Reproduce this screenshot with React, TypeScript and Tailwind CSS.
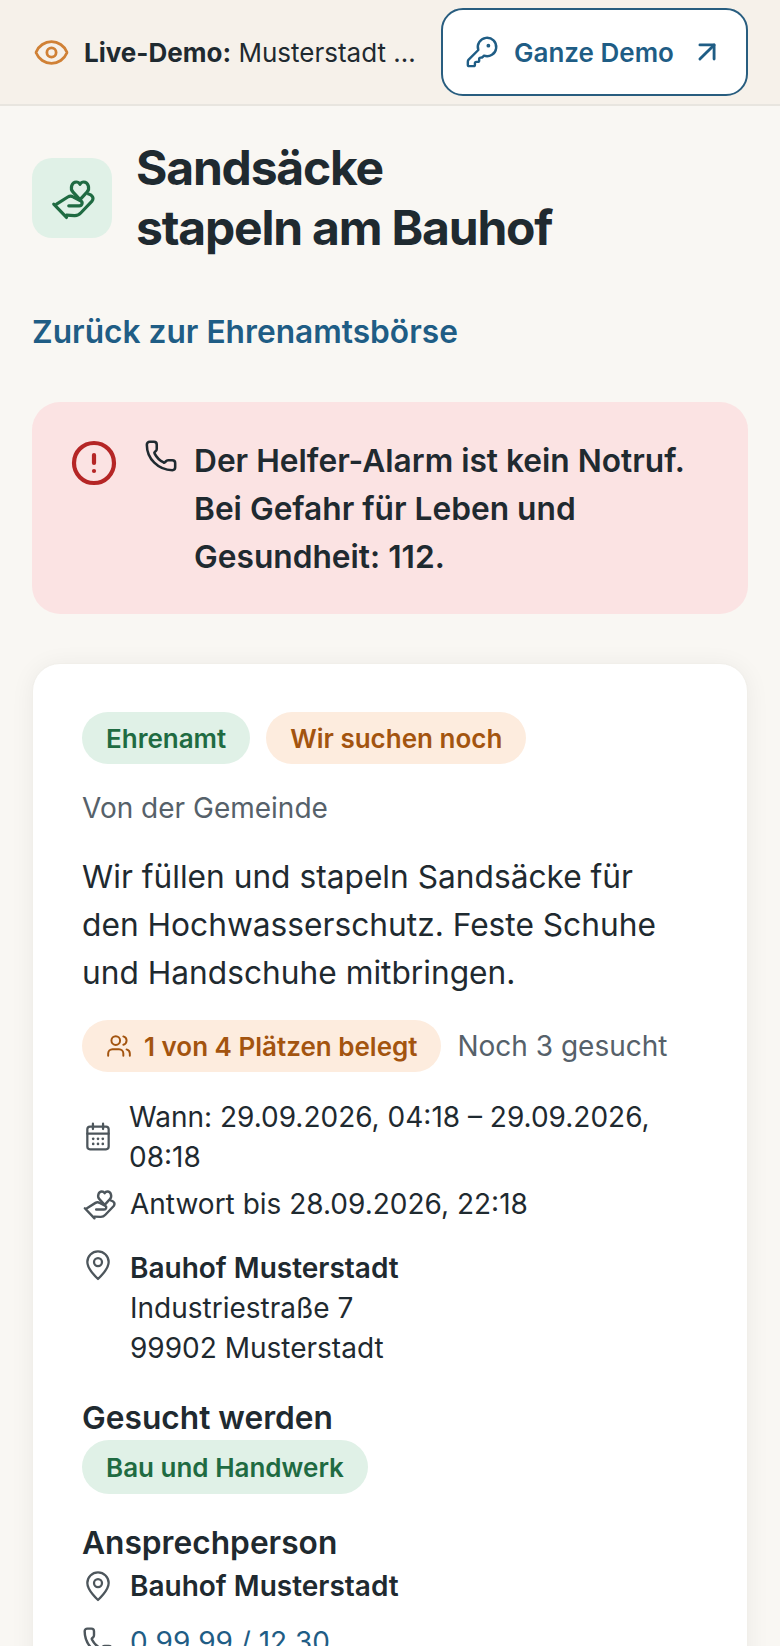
import { ArrowUpRight, CircleAlert, Eye, KeyRound, Phone, Users } from "lucide-react";

const font = "font-['Inter',sans-serif]";

function HandHeartIcon({ className }: { className: string }) {
  return (
    <svg viewBox="0 0 24 24" fill="none" stroke="currentColor" strokeWidth="1.7" strokeLinecap="round" strokeLinejoin="round" className={className}>
      <path d="M16 12.6 12.3 8.6C10.5 6.7 11.6 3.2 14 3.2c.9 0 1.6.5 2 1.2.4-.7 1.1-1.2 2-1.2 2.4 0 3.5 3.5 1.7 5.4Z" />
      <path d="M3.5 15 9.5 11.2c1.1-.7 2-.6 3 0l4.1 2.2c1 .7.5 2.5-1 2.5H10" />
      <path d="M20.6 9.6c1.9.4 3 2.2 1.8 3.8l-5.9 6.2c-1 1.1-2 1.6-3.5 1.5l-4.200-.2" />
      <path d="M2 15 8.8 22.1" />
    </svg>
  );
}

function PinIcon({ className }: { className: string }) {
  return (
    <svg viewBox="0 0 24 24" fill="none" stroke="currentColor" strokeWidth="1.7" strokeLinecap="round" strokeLinejoin="round" className={className}>
      <path d="M12 22.5S4 15.4 4 9.8a8 8 0 0 1 16 0c0 5.6-8 12.7-8 12.7Z" />
      <circle cx="12" cy="9.8" r="3" />
    </svg>
  );
}

function CalendarIcon({ className }: { className: string }) {
  return (
    <svg viewBox="0 0 24 24" fill="none" stroke="currentColor" strokeWidth="1.7" strokeLinecap="round" strokeLinejoin="round" className={className}>
      <rect x="4" y="4.2" width="16" height="17" rx="2" />
      <path d="M8.2 2v4M15.8 2v4M4 9.5h16" />
      <g fill="currentColor" stroke="none">
        <circle cx="8.4" cy="13.4" r="1" />
        <circle cx="12" cy="13.4" r="1" />
        <circle cx="15.6" cy="13.4" r="1" />
        <circle cx="8.4" cy="17.2" r="1" />
        <circle cx="12" cy="17.2" r="1" />
        <circle cx="15.6" cy="17.2" r="1" />
      </g>
    </svg>
  );
}

export default function App() {
  return (
    <div className={`${font} h-[1646px] overflow-hidden bg-[#f9f7f3] text-[#1f2a30]`}>
      {/* demo bar */}
      <header className="flex h-[106px] items-center justify-between border-b-2 border-[#e8e5df] bg-[#f6f1ea] pl-[33px] pr-[32px]">
        <div className="flex min-w-0 items-center gap-[14px]">
          <Eye className="h-[37px] w-[37px] shrink-0 text-[#d08136]" strokeWidth={1.8} />
          <p className="whitespace-nowrap text-[26px]"><span className="font-bold">Live-Demo:</span> Musterstadt …</p>
        </div>
        <a className="flex h-[88px] w-[307px] shrink-0 items-center gap-[15px] rounded-[22px] border-2 border-[#285d7f] bg-white pl-[22px] text-[26px] font-semibold text-[#1f5d85]">
          <KeyRound className="h-[34px] w-[34px]" strokeWidth={1.7} />
          <span>Ganze Demo</span>
          <ArrowUpRight className="ml-[1px] h-[34px] w-[34px]" strokeWidth={2} />
        </a>
      </header>

      <main className="px-[32px]">
        <div className="mt-[32px] flex items-center gap-[24px]">
          <div className="flex h-[80px] w-[80px] shrink-0 items-center justify-center rounded-[20px] bg-[#e0f1e7]">
            <HandHeartIcon className="h-[45px] w-[45px] text-[#1f6b42]" />
          </div>
          <h1 className="text-[48px] font-bold leading-[60px] tracking-[-0.025em]">Sandsäcke<br />stapeln am Bauhof</h1>
        </div>

        <a className="mt-[50px] block text-[31.7px] font-semibold leading-[48px] text-[#1f5d85]">Zurück zur Ehrenamtsbörse</a>

        <section className="mt-[46px] flex h-[212px] rounded-[28px] bg-[#fbe3e3] pl-[38px] pr-[32px] pt-[34px]">
          <CircleAlert className="mt-[3px] h-[48px] w-[48px] shrink-0 text-[#b52626]" strokeWidth={2.1} />
          <Phone className="ml-[26px] mt-[3px] h-[34px] w-[34px] shrink-0" strokeWidth={1.8} />
          <p className="ml-[16px] mt-[1px] text-[31.7px] font-semibold leading-[48px]">Der Helfer-Alarm ist kein Notruf. Bei Gefahr für Leben und Gesundheit: 112.</p>
        </section>

        <section className="mt-[49px] rounded-[28px] border border-[#f1efea] bg-white px-[49px] pb-[80px] pt-[48px] shadow-[0_2px_24px_rgba(0,0,0,0.06)]">
          <div className="flex gap-[16px]">
            <span className="flex h-[52px] items-center rounded-full bg-[#e0f1e7] px-[24px] text-[26px] font-semibold text-[#1f6b42]">Ehrenamt</span>
            <span className="flex h-[52px] items-center rounded-full bg-[#fdecde] px-[24px] text-[26px] font-semibold text-[#a3540f]">Wir suchen noch</span>
          </div>
          <p className="mt-[23px] text-[28px] leading-[42px] text-[#56616a]">Von der Gemeinde</p>
          <p className="mt-[24px] max-w-[600px] text-[31.7px] leading-[48px]">Wir füllen und stapeln Sandsäcke für den Hochwasserschutz. Feste Schuhe und Handschuhe mitbringen.</p>

          <div className="mt-[23px] flex items-center gap-[16px]">
            <span className="flex h-[52px] items-center gap-[12px] rounded-full bg-[#fdecde] px-[24px] text-[26px] font-semibold text-[#a3540f]">
              <Users className="h-[26px] w-[26px]" strokeWidth={1.8} />
              1 von 4 Plätzen belegt
            </span>
            <span className="text-[28px] text-[#56616a]">Noch 3 gesucht</span>
          </div>

          <div className="mt-[25px] flex items-center gap-[15px]">
            <CalendarIcon className="h-[32px] w-[32px] shrink-0 text-[#4d565c]" />
            <p className="text-[28px] leading-[40px]">Wann: 29.09.2026, 04:18 – 29.09.2026, 08:18</p>
          </div>
          <div className="mt-[7px] flex items-center gap-[14px]">
            <HandHeartIcon className="h-[34px] w-[34px] shrink-0 text-[#4d565c]" />
            <p className="text-[28px] leading-[40px]">Antwort bis 28.09.2026, 22:18</p>
          </div>

          <div className="mt-[24px] flex gap-[16px]">
            <PinIcon className="mt-[1px] h-[32px] w-[32px] shrink-0 text-[#4d565c]" />
            <div className="text-[28px] leading-[40px]">
              <p className="font-semibold">Bauhof Musterstadt</p>
              <p>Industriestraße 7</p>
              <p>99902 Musterstadt</p>
            </div>
          </div>

          <h2 className="mt-[28px] text-[31.7px] font-semibold leading-[44px]">Gesucht werden</h2>
          <span className="inline-flex h-[54px] items-center rounded-full bg-[#e0f1e7] px-[24px] text-[26px] font-semibold text-[#1f6b42]">Bau und Handwerk</span>

          <h2 className="mt-[27px] text-[31.7px] font-semibold leading-[44px]">Ansprechperson</h2>
          <div className="mt-[1px] flex items-center gap-[16px]">
            <PinIcon className="h-[32px] w-[32px] shrink-0 text-[#4d565c]" />
            <p className="text-[28px] font-semibold leading-[40px]">Bauhof Musterstadt</p>
          </div>
          <div className="mt-[16px] flex items-center gap-[16px]">
            <Phone className="h-[32px] w-[32px] shrink-0 text-[#4d565c]" strokeWidth={1.8} />
            <a className="text-[28px] leading-[40px] text-[#1f5d85]">0 99 99 / 12 30</a>
          </div>
        </section>
      </main>
    </div>
  );
}
